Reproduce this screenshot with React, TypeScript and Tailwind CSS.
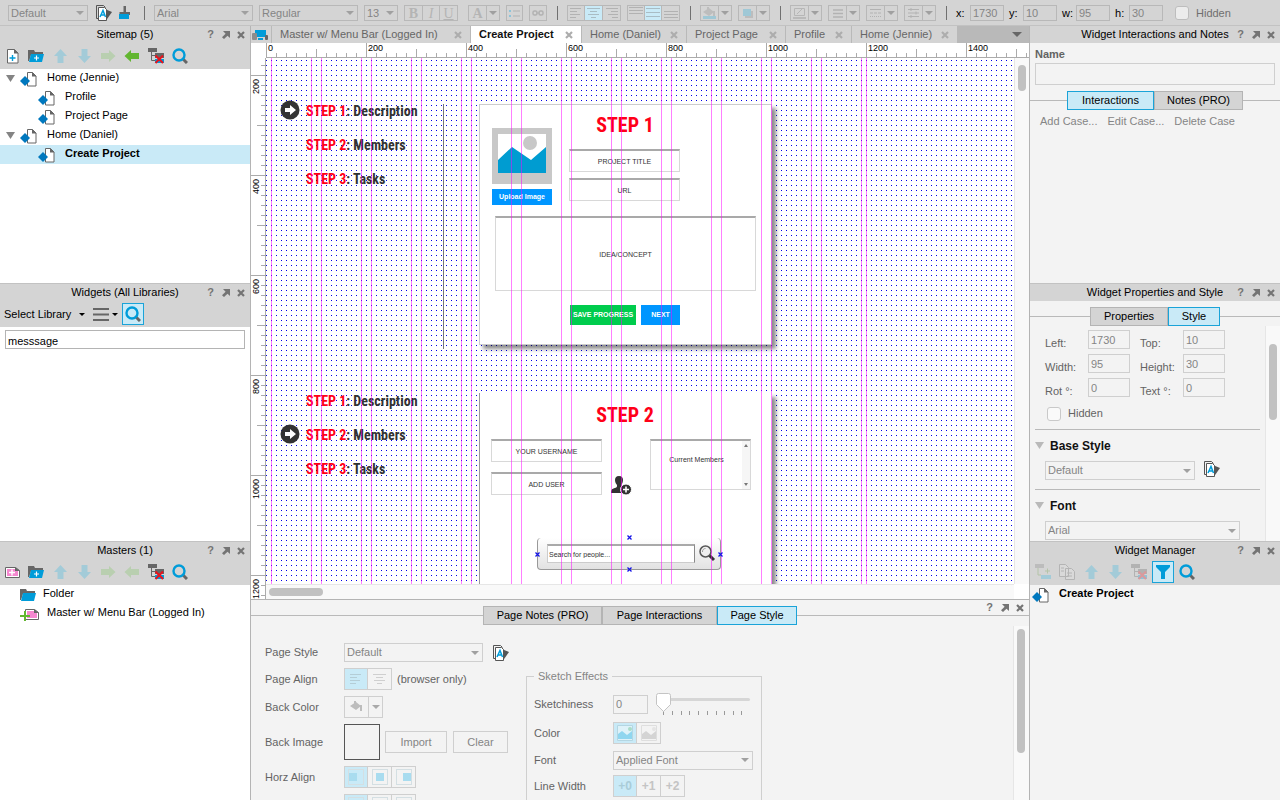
import React from "react";

type Kids = { children?: React.ReactNode };

const titleFont = "font-['Liberation_Sans_Narrow','Roboto_Condensed','Open_Sans_Condensed','Liberation_Sans',sans-serif]";

/* ---------- icons ---------- */

function Svg({ children, w = 16, h = 16, className = "" }: Kids & { w?: number; h?: number; className?: string }) {
  return (
    <svg width={w} height={h} viewBox={`0 0 ${w} ${h}`} className={`shrink-0 ${className}`} aria-hidden="true" fill="none">
      {children}
    </svg>
  );
}

const Caret = ({ className = "text-[#a0a0a0]" }: { className?: string }) => (
  <Svg w={8} h={4} className={className}>
    <path d="M0 0h8L4 4z" fill="currentColor" />
  </Svg>
);

const PageIcon = () => (
  <Svg w={17}>
    <path d="M7.500 1.500h5l3.500 3.500v10H7.500z" fill="#fff" stroke="#666" />
    <path d="M12 1v4.500h4.500z" fill="#666" />
    <path d="M0 10l5-5 5 5-5 5z" fill="#0078be" />
  </Svg>
);

const AddPage = () => (
  <Svg>
    <path d="M3.500 1.500h7l3.500 3.500v10H3.500z" fill="#fff" stroke="#666" />
    <path d="M10 1v4.500h4.500z" fill="#666" />
    <path d="M8.500 7v6M5.500 10h6" stroke="#009cd9" strokeWidth="1.400" />
  </Svg>
);

const Folder = ({ plus }: { plus?: boolean }) => (
  <Svg>
    <path d="M0 2h6l1 2h8v3H3L1 13H0z" fill="#666" />
    <path d="M3 6h13l-2 8H1z" fill="#009cd9" />
    {plus && <path d="M8.500 7.500v5M6 10h5" stroke="#fff" strokeWidth="1.200" />}
  </Svg>
);

const AddMaster = () => (
  <Svg>
    <path d="M1.500 3.500h10l4 3v7h-14z" fill="#fff" stroke="#666" />
    <path d="M3 5h8v2h3v5H3z" fill="#f587cf" />
    <path d="M11 3v4h5z" fill="#666" />
    <path d="M8 5.500v6M5 8.500h6" stroke="#fff" strokeWidth="1.400" />
  </Svg>
);

const MasterIcon = () => (
  <Svg w={20} h={16}>
    <path d="M5.500 3.500h9l4 3v7h-13z" fill="#fff" stroke="#666" />
    <path d="M7 5h7v2h3v5H7z" fill="#f587cf" />
    <path d="M14 3v4h5z" fill="#666" />
    <path d="M5 5v10M0 10h10" stroke="#62b630" strokeWidth="2" />
  </Svg>
);

const arrowPaths = {
  up: "M8.500 1L15 8h-3.500v7h-6V8H2z",
  down: "M8.500 15L2 8h3.500V1h6v7H15z",
  right: "M15.500 8L9 14v-3H1V5h8V2z",
  left: "M.5 8L7 2v3h8v6H7v3z",
};

const Arrow = ({ dir, className }: { dir: keyof typeof arrowPaths; className: string }) => (
  <Svg className={className}>
    <path d={arrowPaths[dir]} fill="currentColor" />
  </Svg>
);

const DeleteTree = ({ className = "" }: { className?: string }) => (
  <Svg className={className}>
    <path d="M0 0h9v4H0zM7 5h9v5H7z" fill="#666" />
    <path d="M3.500 4v8.500h4M3.500 7.500h4" stroke="#666" />
    <path d="M7 11h9v4H7z" fill="#009cd9" />
    <path d="M7.500 7.500l7.500 7.500M15 7.500L7.500 15" stroke="#e8131d" strokeWidth="2" />
  </Svg>
);

const SearchIcon = () => (
  <Svg>
    <path d="M11 11l4 4" stroke="#666" strokeWidth="3" />
    <circle cx="7" cy="7" r="5.500" stroke="#009cd9" strokeWidth="2.400" />
  </Svg>
);

const StyleIcon = () => (
  <Svg>
    <path d="M.5 13.500V.5h7l2 2M.5 13.500h2" stroke="#555" />
    <path d="M2.500 2.500h6l2 2v11h-8z" fill="#fff" stroke="#555" />
    <path d="M10 4.500l6 2.500-6 8.500z" fill="#555" />
    <path d="M4 12l3-6.500L9.500 12M5 10h4" stroke="#009cd9" strokeWidth="1.500" />
  </Svg>
);

const BrushIcon = () => (
  <Svg w={14} h={14}>
    <path d="M5.500 0h2.500v6h4v3H1.500V6h4z" fill="#666" />
    <path d="M1 8h10v5H1z" fill="#009cd9" />
  </Svg>
);

const Lines = ({ rows, className = "text-[#b2b2b2]" }: { rows: number[][]; className?: string }) => (
  <Svg w={14} h={12} className={className}>
    {rows.map(([x, y, w]) => (
      <rect key={y} x={x} y={y} width={w} height={1} fill="currentColor" />
    ))}
  </Svg>
);

const leftRows = [[1, 1, 11], [1, 4, 7], [1, 7, 10], [1, 10, 6]];
const centerRows = [[0, 1, 13], [3, 4, 7], [1, 7, 11], [4, 10, 5]];
const rightRows = [[1, 1, 12], [6, 4, 7], [3, 7, 10], [7, 10, 6]];
const topRows = [[0, 0, 14], [0, 3, 14], [0, 6, 14]];
const midRows = [[0, 1, 14], [0, 5, 14], [0, 9, 14]];
const bottomRows = [[0, 4, 14], [0, 7, 14], [0, 10, 14]];

const Bucket = ({ water = false }: { water?: boolean }) => (
  <Svg w={15} h={12}>
    <path d="M1 5l6-4 5 4-5 4z" fill="#bdbdbd" />
    <path d="M12 4v6M6 0v4" stroke="#bdbdbd" strokeWidth="2" />
    <path d="M1 9h13v3H1z" fill={water ? "#9fc8d6" : "none"} />
  </Svg>
);

/* ---------- shared controls ---------- */

function Select({ label, value, className }: { label: string; value: string; className: string }) {
  return (
    <div className={`relative flex shrink-0 items-center border ${className}`}>
      <select aria-label={label} defaultValue={value} className="h-full w-full appearance-none bg-transparent px-[2px] leading-none text-[#858585] outline-none">
        <option>{value}</option>
      </select>
      <span className="pointer-events-none absolute right-[3px]">
        <Caret />
      </span>
    </div>
  );
}

function Group({ children, className = "" }: Kids & { className?: string }) {
  return <div className={`flex shrink-0 divide-x border ${className}`}>{children}</div>;
}

function ToolBtn({ label, children, on, w }: Kids & { label: string; on?: boolean; w: string }) {
  return (
    <button aria-label={label} className={`flex h-full items-center justify-center border-inherit ${w} ${on ? "bg-[#c9eaf7]" : ""}`}>
      {children}
    </button>
  );
}

const barGroup = "h-4 border-[#b8b8b8] divide-[#b8b8b8]";
const panelGroup = "h-[22px] border-[#cfcfcf] divide-[#cfcfcf]";

const Divider = () => <div className="mr-[3px] ml-[4px] h-[14px] w-px shrink-0 bg-[#707070]" />;

const CloseIcon = () => (
  <Svg w={8} h={8}>
    <path d="M1 1l6 6M7 1L1 7" stroke="currentColor" strokeWidth="2.200" />
  </Svg>
);

const PanelButtons = () => (
  <div className="flex items-center gap-[7px] pr-[5px] text-[#747474]">
    <button aria-label="Help" className="text-[11px] leading-none font-bold">?</button>
    <button aria-label="Undock">
      <Svg w={9} h={8}>
        <path d="M2 0h7v7L6.500 4.700 3 8 1 6.200l3.600-3.500z" fill="currentColor" />
      </Svg>
    </button>
    <button aria-label="Close">
      <CloseIcon />
    </button>
  </div>
);

function PanelTitle({ children }: Kids) {
  return (
    <div className="grid h-[17px] grid-cols-[1fr_auto_1fr] items-center">
      <span />
      <h2 className="whitespace-nowrap">{children}</h2>
      <div className="flex justify-end">
        <PanelButtons />
      </div>
    </div>
  );
}

function Panel({ title, tools, children, body, grow = "flex-[258]" }: Kids & { title: string; tools?: React.ReactNode; body: string; grow?: string }) {
  return (
    <section className={`flex min-h-0 flex-col ${grow}`}>
      <header className="shrink-0 border-t border-[#c2c2c2] bg-[#d4d4d4]">
        <PanelTitle>{title}</PanelTitle>
        {tools && <div className="flex h-[26px] items-center gap-2 px-1">{tools}</div>}
      </header>
      <div className={`min-h-0 flex-1 overflow-hidden ${body}`}>{children}</div>
    </section>
  );
}

function TabStrip({ tabs, active }: { tabs: { name: string; w: string }[]; active: string }) {
  return (
    <div className="flex shrink-0 items-center">
      <div className="h-px flex-1 bg-[#b9b9b9]" />
      <div role="tablist" className="flex">
        {tabs.map((t) => (
          <button
            key={t.name}
            role="tab"
            aria-selected={t.name === active}
            className={`h-[19px] border ${t.w} ${t.name === active ? "border-[#1aa3d8] bg-[#c9eaf7]" : "border-[#b4b4b4] bg-[#d4d4d4]"}`}
          >
            {t.name}
          </button>
        ))}
      </div>
      <div className="h-px flex-1 bg-[#b9b9b9]" />
    </div>
  );
}

const moveArrows = (left: string) => (
  <>
    <button aria-label="Move up"><Arrow dir="up" className="text-[#a3cbd8]" /></button>
    <button aria-label="Move down"><Arrow dir="down" className="text-[#a3cbd8]" /></button>
    <button aria-label="Indent"><Arrow dir="right" className="text-[#b9cfb0]" /></button>
    <button aria-label="Outdent"><Arrow dir="left" className={left} /></button>
    <button aria-label="Delete"><DeleteTree /></button>
    <button aria-label="Search"><SearchIcon /></button>
  </>
);

/* ---------- top toolbar ---------- */

function BarField({ id, value }: { id: string; value: string }) {
  return (
    <div className="flex shrink-0 items-center">
      <label htmlFor={`bar-${id}`} className="w-[14px]">{id}:</label>
      <input id={`bar-${id}`} defaultValue={value} className="h-4 w-[34px] border border-[#b8b8b8] bg-transparent px-[2px] text-[#858585] outline-none" />
    </div>
  );
}

const DropBtn = ({ label }: { label: string }) => (
  <ToolBtn label={label} w="w-[12px]">
    <Caret />
  </ToolBtn>
);

function Toolbar() {
  const sel = "h-4 border-[#b8b8b8]";
  return (
    <div className="flex h-[25px] shrink-0 items-center gap-[6px] overflow-hidden bg-[#d4d4d4] pt-[1px] pl-2">
      <Select label="Widget style" value="Default" className={`w-[80px] ${sel}`} />
      <button aria-label="Style editor" className="ml-[2px]"><StyleIcon /></button>
      <button aria-label="Format painter" className="w-4"><BrushIcon /></button>
      <Divider />
      <Select label="Font family" value="Arial" className={`w-[99px] ${sel}`} />
      <Select label="Font weight" value="Regular" className={`w-[99px] ${sel}`} />
      <Select label="Font size" value="13" className={`w-[34px] ${sel}`} />
      <Group className={barGroup}>
        <ToolBtn label="Bold" w="w-[18px]"><b className="font-['Liberation_Serif',serif] text-[14px] text-[#b4b4b4]">B</b></ToolBtn>
        <ToolBtn label="Italic" w="w-[17px]"><i className="font-['Liberation_Serif',serif] text-[14px] text-[#b4b4b4]">I</i></ToolBtn>
        <ToolBtn label="Underline" w="w-[17px]"><u className="font-['Liberation_Serif',serif] text-[14px] text-[#b4b4b4]">U</u></ToolBtn>
      </Group>
      <Group className={`ml-[4px] ${barGroup}`}>
        <ToolBtn label="Text colour" w="w-[18px]"><b className="font-['Liberation_Serif',serif] text-[14px] text-[#b4b4b4]">A</b></ToolBtn>
        <DropBtn label="Text colour menu" />
      </Group>
      <Group className={barGroup}>
        <ToolBtn label="Bullets" w="w-[15px]">
          <Svg w={12} h={9}>
            <path d="M0 1h2v2H0zM0 6h2v2H0z" fill="#8cc4da" />
            <path d="M4 2h7M4 7h7" stroke="#b2b2b2" />
          </Svg>
        </ToolBtn>
      </Group>
      <Group className={barGroup}>
        <ToolBtn label="Link" w="w-[16px]">
          <Svg w={12} h={6}>
            <rect x="1" y="1" width="4" height="4" rx="1.500" stroke="#b2b2b2" strokeWidth="1.500" />
            <rect x="7" y="1" width="4" height="4" rx="1.500" stroke="#b2b2b2" strokeWidth="1.500" />
            <path d="M4 3h4" stroke="#b2b2b2" />
          </Svg>
        </ToolBtn>
      </Group>
      <Divider />
      <Group className={barGroup}>
        <ToolBtn label="Align left" w="w-[17px]"><Lines rows={leftRows} /></ToolBtn>
        <ToolBtn label="Align centre" w="w-[18px]" on><Lines rows={centerRows} className="text-[#a9bcc4]" /></ToolBtn>
        <ToolBtn label="Align right" w="w-[17px]"><Lines rows={rightRows} /></ToolBtn>
      </Group>
      <Group className={barGroup}>
        <ToolBtn label="Align top" w="w-[17px]"><Lines rows={topRows} /></ToolBtn>
        <ToolBtn label="Align middle" w="w-[17px]" on><Lines rows={midRows} className="text-[#a9bcc4]" /></ToolBtn>
        <ToolBtn label="Align bottom" w="w-[17px]"><Lines rows={bottomRows} /></ToolBtn>
      </Group>
      <Divider />
      <Group className={barGroup}>
        <ToolBtn label="Fill colour" w="w-[18px]"><Bucket water /></ToolBtn>
        <DropBtn label="Fill menu" />
      </Group>
      <Group className={barGroup}>
        <ToolBtn label="Shadow" w="w-[18px]">
          <Svg w={10} h={9}>
            <path d="M2 2h8v7H2z" fill="#bdbdbd" />
            <path d="M0 0h8v7H0z" fill="#9fc8d6" />
          </Svg>
        </ToolBtn>
        <DropBtn label="Shadow menu" />
      </Group>
      <Divider />
      <Group className={barGroup}>
        <ToolBtn label="Line colour" w="w-[18px]">
          <Svg w={13} h={12}>
            <path d="M1.500 1.500h10v7h-10zM4 7l6-6" stroke="#b6b6b6" />
            <path d="M0 10h13v2H0z" fill="#bababa" />
          </Svg>
        </ToolBtn>
        <DropBtn label="Line colour menu" />
      </Group>
      <Group className={barGroup}>
        <ToolBtn label="Line width" w="w-[18px]">
          <Svg w={10} h={9}><path d="M0 1h10M0 4.500h10M0 8h10" stroke="#b2b2b2" strokeWidth="1.500" /></Svg>
        </ToolBtn>
        <DropBtn label="Line width menu" />
      </Group>
      <Group className={barGroup}>
        <ToolBtn label="Line pattern" w="w-[18px]">
          <Svg w={11} h={8}>
            <path d="M0 .5h11" stroke="#b2b2b2" />
            <path d="M0 4h11" stroke="#b2b2b2" strokeDasharray="3 1" />
            <path d="M0 7.500h11" stroke="#b2b2b2" strokeDasharray="1 1" />
          </Svg>
        </ToolBtn>
        <DropBtn label="Line pattern menu" />
      </Group>
      <Group className={barGroup}>
        <ToolBtn label="Arrow style" w="w-[18px]">
          <Svg w={11} h={10}>
            <path d="M0 1.500h11M0 5h11M0 8.500h11M3 0v3M8 3.500v3M3 7v3" stroke="#b2b2b2" />
          </Svg>
        </ToolBtn>
        <DropBtn label="Arrow style menu" />
      </Group>
      <Divider />
      <div className="flex items-center gap-[5px]">
        <BarField id="x" value="1730" />
        <BarField id="y" value="10" />
        <BarField id="w" value="95" />
        <BarField id="h" value="30" />
      </div>
      <label className="ml-[6px] flex items-center gap-[7px] text-[#6f6f6f]">
        <input type="checkbox" className="size-[14px] appearance-none rounded-[3px] border border-[#bdbdbd] bg-[#ececec]" />
        Hidden
      </label>
    </div>
  );
}

/* ---------- left side ---------- */

function TreeRow({ label, child, open, selected }: { label: string; child?: boolean; open?: boolean; selected?: boolean }) {
  return (
    <li className={`flex h-[19px] items-center ${child ? "pl-[38px]" : "pl-[6px]"} ${selected ? "bg-[#c9eaf7] font-bold" : ""}`}>
      {open && (
        <Svg w={9} h={7} className="mr-[5px]">
          <path d="M0 0h9L4.500 7z" fill="#848484" />
        </Svg>
      )}
      <PageIcon />
      <span className="ml-[10px] pb-[2px]">{label}</span>
    </li>
  );
}

function LeftSide() {
  return (
    <aside className="flex w-[250px] shrink-0 flex-col">
      <Panel
        title="Sitemap (5)"
        body="bg-white"
        tools={
          <>
            <button aria-label="Add page"><AddPage /></button>
            <button aria-label="Add folder"><Folder plus /></button>
            {moveArrows("text-[#62b630]")}
          </>
        }
      >
        <ul>
          <TreeRow label="Home (Jennie)" open />
          <TreeRow label="Profile" child />
          <TreeRow label="Project Page" child />
          <TreeRow label="Home (Daniel)" open />
          <TreeRow label="Create Project" child selected />
        </ul>
      </Panel>
      <Panel
        title="Widgets (All Libraries)"
        body="bg-white p-[5px] pt-[3px]"
        tools={
          <>
            <button className="flex items-center gap-2">
              Select Library
              <Svg w={6} h={3}><path d="M0 0h6L3 3z" fill="#000" /></Svg>
            </button>
            <button aria-label="Library options" className="flex items-center gap-[3px]">
              <Svg w={16} h={13}><path d="M0 1h16M0 6.500h16M0 12h16" stroke="#666" strokeWidth="2" /></Svg>
              <Svg w={6} h={3}><path d="M0 0h6L3 3z" fill="#000" /></Svg>
            </button>
            <button aria-label="Search widgets" className="-ml-[4px] flex size-[22px] items-center justify-center border border-[#1aa3d8] bg-[#c9eaf7]">
              <SearchIcon />
            </button>
          </>
        }
      >
        <input aria-label="Search widgets" defaultValue="messsage" className="block h-[19px] w-full border border-[#b4b4b4] px-[2px] pt-[2px] outline-none" />
      </Panel>
      <Panel
        title="Masters (1)"
        grow="flex-[259]"
        body="bg-white"
        tools={
          <>
            <button aria-label="Add master"><AddMaster /></button>
            <button aria-label="Add folder"><Folder plus /></button>
            {moveArrows("text-[#b9cfb0]")}
          </>
        }
      >
        <ul>
          <li className="flex h-[19px] items-center gap-[7px] pl-5"><Folder /><span className="pb-[2px]">Folder</span></li>
          <li className="flex h-[19px] items-center gap-[7px] pl-5"><MasterIcon /><span className="pb-[2px]">Master w/ Menu Bar (Logged In)</span></li>
        </ul>
      </Panel>
    </aside>
  );
}

/* ---------- centre: tabs, rulers, canvas ---------- */

const pageTabs = [
  { name: "Master w/ Menu Bar (Logged In)", w: "w-[199px]" },
  { name: "Create Project", w: "w-[111px]", active: true },
  { name: "Home (Daniel)", w: "w-[105px]" },
  { name: "Project Page", w: "w-[99px]" },
  { name: "Profile", w: "w-[66px]" },
  { name: "Home (Jennie)", w: "w-[106px]" },
];

function PageTabs() {
  return (
    <div className="flex h-[17px] shrink-0 bg-[#b9b9b9]">
      <div className="flex w-5 shrink-0 items-center bg-[#d4d4d4] pl-[1px]">
        <Svg w={17} h={12}>
          <path d="M3 1h11v7H3zM6 9h5v2H6z" fill="#009cd9" />
          <rect x="0" y="4" width="5" height="7" rx="1" fill="#8c8c8c" />
          <rect x="13" y="6" width="3" height="5" rx="1" fill="#666" />
        </Svg>
      </div>
      {pageTabs.map((t) => (
        <div key={t.name} className={`flex shrink-0 items-center justify-between border-l border-[#b9b9b9] pr-[8px] pl-2 ${t.w} ${t.active ? "bg-white font-bold text-[#111]" : "bg-[#d4d4d4] text-[#666]"}`}>
          <button className="whitespace-nowrap">{t.name}</button>
          <button aria-label={`Close ${t.name}`} className="text-[#adadad]"><CloseIcon /></button>
        </div>
      ))}
      <button aria-label="All tabs" className="ml-auto pr-[7px]">
        <Svg w={10} h={5}><path d="M0 0h10L5 5z" fill="#666" /></Svg>
      </button>
    </div>
  );
}

const HTicks = () => (
  <svg className="absolute inset-0 h-full w-full" aria-hidden="true">
    <pattern id="hticks" width="100" height="15" patternUnits="userSpaceOnUse">
      <path d="M.5 0v15M50.500 6v9M10.500 10v5M20.500 10v5M30.500 10v5M40.500 10v5M60.500 10v5M70.500 10v5M80.500 10v5M90.500 10v5" stroke="#ababab" />
    </pattern>
    <rect width="100%" height="100%" fill="url(#hticks)" />
  </svg>
);

const VTicks = () => (
  <svg className="absolute inset-0 h-full w-full" aria-hidden="true">
    <pattern id="vticks" y="17" width="14" height="100" patternUnits="userSpaceOnUse">
      <path d="M0 .5h14M6 50.500h8M10 10.500h4M10 20.500h4M10 30.500h4M10 40.500h4M10 60.500h4M10 70.500h4M10 80.500h4M10 90.500h4" stroke="#ababab" />
    </pattern>
    <rect width="100%" height="100%" fill="url(#vticks)" />
  </svg>
);

function HRuler() {
  return (
    <div className="relative ml-[15px] flex h-[15px] shrink-0 overflow-hidden border-b border-[#ababab]">
      <HTicks />
      {[0, 200, 400, 600, 800, 1000, 1200, 1400].map((n) => (
        <span key={n} className="w-[100px] shrink-0 pl-[2px] text-[9px] leading-[10px]">{n}</span>
      ))}
    </div>
  );
}

function VRuler() {
  return (
    <div className="relative flex w-[15px] shrink-0 flex-col overflow-hidden border-r border-[#ababab] pt-[17px]">
      <VTicks />
      {[200, 400, 600, 800, 1000, 1200].map((n) => (
        <span key={n} className="h-[100px] shrink-0 rotate-180 pb-[4px] text-right text-[9px] leading-[11px] [writing-mode:vertical-rl]">{n}</span>
      ))}
    </div>
  );
}

const guides = [
  5, 45, 55, 95, 105, 145, 155, 195, 205, 245, 255, 295, 305, 345, 355, 395, 405, 445, 455, 495, 505, 545, 555, 595, 600,
];

const Grid = () => (
  <svg className="absolute inset-0 h-full w-full" aria-hidden="true">
    <pattern id="dots" y="2" width="5" height="5" patternUnits="userSpaceOnUse">
      <rect width="1" height="1" fill="#0000e6" />
    </pattern>
    <rect width="100%" height="100%" fill="url(#dots)" />
  </svg>
);

const Guides = () => (
  <svg className="pointer-events-none absolute inset-0 h-full w-full" aria-hidden="true">
    {guides.map((x) => (
      <rect key={x} x={x} y="0" width="1" height="100%" fill="#ff00ff" fillOpacity="0.5" />
    ))}
  </svg>
);

function StepList({ current, pos }: { current: number; pos: string }) {
  return (
    <ol className={`absolute left-[14px] ${pos}`}>
      {["Description", "Members", "Tasks"].map((s, i) => (
        <li key={s} className="flex h-[34px] items-center">
          <span className="w-[26px]">
            {current === i && (
              <Svg w={20} h={20}>
                <circle cx="10" cy="10" r="9.500" fill="#333" />
                <path d="M5 8h5V5l6 5-6 5v-3H5z" fill="#fff" />
              </Svg>
            )}
          </span>
          <span className={`pt-[2px] text-[14px] leading-[18px] font-bold whitespace-nowrap text-[#333] ${titleFont}`}>
            <span className="text-[#ff0018]">STEP {i + 1}</span>: {s}
          </span>
        </li>
      ))}
    </ol>
  );
}

function Field({ text, pos }: { text: string; pos: string }) {
  return (
    <input
      aria-label={text}
      defaultValue={text}
      className={`absolute border border-t-2 border-[#d8d8d8] border-t-[#a9a9a9] bg-white text-center text-[7px] text-[#333] outline-none ${pos}`}
    />
  );
}

const Handle = ({ pos }: { pos: string }) => (
  <Svg w={5} h={5} className={`absolute ${pos}`}>
    <path d="M.5.5l4 4M4.500.5l-4 4" stroke="#1414e6" strokeWidth="1.300" />
  </Svg>
);

function Canvas() {
  return (
    <div className="relative min-h-0 min-w-0 flex-1 overflow-hidden bg-white">
      <Grid />
      <StepList current={0} pos="top-[35px]" />
      <div className="absolute top-[46px] left-[177px] h-[245px] w-px bg-[#777]" />
      <StepList current={1} pos="top-[325px]" />

      {/* first step card */}
      <div className="absolute top-[46px] left-[213px] h-[241px] w-[293px] border border-[#ccc] bg-white shadow-[4px_4px_4px_rgba(0,0,0,0.45)]" />
      <h3 className={`absolute top-[52px] left-[313px] w-[92px] text-center text-[20px] leading-[30px] font-bold whitespace-nowrap text-[#ff0018] ${titleFont}`}>STEP 1</h3>
      <Svg w={60} h={56} className="absolute top-[70px] left-[226px]">
        <path d="M0 0h60v56H0z" fill="#c8c8c8" />
        <path d="M6 6h48v39H6z" fill="#fff" />
        <circle cx="38" cy="15" r="7" fill="#c8c8c8" />
        <path d="M6 32l14-13 19 13 15-13v26H6z" fill="#009cd1" />
      </Svg>
      <button className="absolute top-[131px] left-[226px] h-4 w-[60px] bg-[#0096ff] text-[7px] font-bold text-white">Upload Image</button>
      <Field text="PROJECT TITLE" pos="top-[91px] left-[303px] h-[23px] w-[111px]" />
      <Field text="URL" pos="top-[120px] left-[303px] h-[23px] w-[111px]" />
      <Field text="IDEA/CONCEPT" pos="top-[158px] left-[229px] h-[75px] w-[261px]" />
      <button className="absolute top-[247px] left-[304px] h-5 w-[66px] bg-[#00cc4d] text-[7px] font-bold whitespace-nowrap text-white">SAVE PROGRESS</button>
      <button className="absolute top-[247px] left-[375px] h-5 w-[39px] bg-[#0096ff] text-[7px] font-bold text-white">NEXT</button>

      {/* second step card */}
      <div className="absolute top-[335px] left-[213px] h-[280px] w-[293px] border-l border-[#999] bg-white shadow-[4px_4px_4px_rgba(0,0,0,0.45)]" />
      <h3 className={`absolute top-[342px] left-[313px] w-[92px] text-center text-[20px] leading-[30px] font-bold whitespace-nowrap text-[#ff0018] ${titleFont}`}>STEP 2</h3>
      <Field text="YOUR USERNAME" pos="top-[381px] left-[225px] h-[23px] w-[111px]" />
      <Field text="ADD USER" pos="top-[414px] left-[225px] h-[23px] w-[111px]" />
      <Svg w={21} h={20} className="absolute top-[417px] left-[345px]">
        <path d="M8 1c3 0 4 2 4 4s-1 4-1.500 5c0 2 1 2 3 3l-2 5H0c0-4 1-4 4-5 2-.6 2-1 2-3-1-1-2-3-2-5s1-4 4-4z" fill="#333" />
        <circle cx="15" cy="14.500" r="5.500" fill="#333" stroke="#fff" />
        <path d="M15 11.500v6M12 14.500h6" stroke="#fff" strokeWidth="1.600" />
      </Svg>
      <div className="absolute top-[381px] left-[384px] flex h-[51px] w-[101px] border border-t-2 border-[#d8d8d8] border-t-[#a9a9a9] bg-white text-[7px] text-[#333]">
        <span className="flex-1 pt-[14px] text-center leading-[9px]">Current Members</span>
        <span className="flex w-[8px] flex-col items-center justify-between bg-[#f6f6f6] py-[3px]">
          <Svg w={4} h={3}><path d="M0 3h4L2 0z" fill="#777" /></Svg>
          <Svg w={4} h={3}><path d="M0 0h4L2 3z" fill="#777" /></Svg>
        </span>
      </div>

      {/* people search */}
      <div className="absolute top-[480px] left-[271px] h-[32px] w-[184px] rounded-[4px] border-r border-b border-l border-[#999] bg-gradient-to-b from-white to-[#e2e2e2]" />
      <input aria-label="Search for people" defaultValue="Search for people..." className="absolute top-[486px] left-[281px] h-[19px] w-[148px] border border-t-2 border-[#ccc] border-t-[#a9a9a9] border-r-[#888] bg-white px-px text-[7px] text-[#333] outline-none" />
      <Svg w={17} h={17} className="absolute top-[487px] left-[433px]">
        <path d="M10 10l5 5" stroke="#333" strokeWidth="3" />
        <circle cx="6.500" cy="6.500" r="5.500" fill="#eee" stroke="#555" strokeWidth="1.500" />
        <path d="M3.500 7a3 3 0 0 1 3-3.500" stroke="#999" />
      </Svg>
      <Guides />
      <Handle pos="top-[477px] left-[361px]" />
      <Handle pos="top-[509px] left-[361px]" />
      <Handle pos="top-[494px] left-[269px]" />
      <Handle pos="top-[494px] left-[452px]" />
    </div>
  );
}

/* ---------- page settings panel ---------- */

function Row({ label, children, h = "h-[22px]" }: Kids & { label: string; h?: string }) {
  return (
    <div className={`flex items-center ${h}`}>
      <span className="w-[79px] shrink-0 text-[#636363]">{label}</span>
      {children}
    </div>
  );
}

const AlignBox = ({ x }: { x: number }) => (
  <Svg w={16} h={16}>
    <rect x=".5" y=".5" width="15" height="15" stroke="#d4dfe3" />
    <rect x={x} y="4" width="8" height="8" fill="#a9dcef" />
  </Svg>
);

const Landscape = ({ muted }: { muted?: boolean }) => (
  <Svg w={16} h={16}>
    <path d="M.5.5h15v15H.5z" fill={muted ? "#f3f3f3" : "#def2f9"} stroke={muted ? "#dedede" : "#b4d6e2"} />
    <path d="M1 9l4-3 5 4 5-4v8H1z" fill={muted ? "#d4d4d4" : "#8fd6ef"} />
    <circle cx="13" cy="4" r="2" fill={muted ? "#e4e4e4" : "#a9dcc8"} />
  </Svg>
);

function PagePanel() {
  const ghost = "text-[#c4c4c4]";
  return (
    <section className="flex h-[201px] shrink-0 flex-col border-t border-[#b4b4b4] bg-[#f3f3f3]">
      <div className="relative pt-[6px]">
        <TabStrip
          active="Page Style"
          tabs={[
            { name: "Page Notes (PRO)", w: "w-[119px]" },
            { name: "Page Interactions", w: "w-[115px]" },
            { name: "Page Style", w: "w-[80px]" },
          ]}
        />
        <div className="absolute top-[2px] right-0"><PanelButtons /></div>
      </div>
      <div className="flex min-h-0 flex-1 justify-between overflow-hidden">
        <div className="flex">
          <div className="flex w-[261px] flex-col gap-[6px] pt-[18px] pl-[14px]">
            <Row label="Page Style">
              <Select label="Page Style" value="Default" className="h-[19px] w-[139px] border-[#cfcfcf]" />
              <button aria-label="Edit page style" className="ml-[10px]"><StyleIcon /></button>
            </Row>
            <Row label="Page Align">
              <Group className={panelGroup}>
                <ToolBtn label="Left" w="w-[23px]" on><Lines rows={leftRows} className="text-[#b4cdd6]" /></ToolBtn>
                <ToolBtn label="Centre" w="w-[23px]"><Lines rows={centerRows} className="text-[#cfcfcf]" /></ToolBtn>
              </Group>
              <span className="ml-[5px] text-[#636363]">(browser only)</span>
            </Row>
            <Row label="Back Color">
              <Group className={panelGroup}>
                <ToolBtn label="Back colour" w="w-[24px]"><Bucket /></ToolBtn>
                <ToolBtn label="Back colour menu" w="w-[13px]"><Caret className="text-[#a9a9a9]" /></ToolBtn>
              </Group>
            </Row>
            <Row label="Back Image" h="h-9">
              <span className="size-9 border border-[#555]" />
              <button className="ml-[5px] h-[22px] w-[62px] border border-[#cfcfcf] text-[#858585]">Import</button>
              <button className="ml-[6px] h-[22px] w-[55px] border border-[#cfcfcf] text-[#858585]">Clear</button>
            </Row>
            <Row label="Horz Align">
              <Group className={panelGroup}>
                <ToolBtn label="Left" w="w-[23px]" on><AlignBox x={1} /></ToolBtn>
                <ToolBtn label="Centre" w="w-[24px]"><AlignBox x={4} /></ToolBtn>
                <ToolBtn label="Right" w="w-[23px]"><AlignBox x={7} /></ToolBtn>
              </Group>
            </Row>
            <Row label="">
              <Group className={panelGroup}>
                <ToolBtn label="Top" w="w-[23px]" on><AlignBox x={4} /></ToolBtn>
                <ToolBtn label="Middle" w="w-[24px]"><AlignBox x={4} /></ToolBtn>
                <ToolBtn label="Bottom" w="w-[23px]"><AlignBox x={4} /></ToolBtn>
              </Group>
            </Row>
          </div>
          <fieldset className="mt-[45px] ml-[14px] h-[180px] w-[236px] border border-[#cfcfcf] pl-[7px]">
            <legend className="px-1 leading-[13px] text-[#858585]">Sketch Effects</legend>
            <div className="flex flex-col gap-[6px] pt-[10px]">
              <Row label="Sketchiness">
                <input aria-label="Sketchiness" defaultValue="0" className="h-[19px] w-[35px] border border-[#cfcfcf] px-[2px] text-[#858585] outline-none" />
                <label className="relative ml-[7px] h-[22px] w-[96px]">
                  <input type="range" aria-label="Sketchiness amount" min="0" max="100" defaultValue="0" className="absolute inset-0 opacity-0" />
                  <Svg w={96} h={22}>
                    <rect x="6" y="5" width="89" height="3" rx="1.500" fill="#d6d6d6" />
                    <path d="M8.500 18v4M17.500 18v4M26.500 18v4M34.500 18v4M43.500 18v4M52.500 18v4M61.500 18v4M69.500 18v4M78.500 18v4M86.500 18v4" stroke="#999" />
                    <path d="M3.500.5h10q2 0 2 2v9l-7 7-7-7v-9q0-2 2-2z" fill="#fff" stroke="#c4c4c4" />
                  </Svg>
                </label>
              </Row>
              <Row label="Color" h="h-[24px]">
                <Group className={panelGroup}>
                  <ToolBtn label="Colour" w="w-[23px]" on><Landscape /></ToolBtn>
                  <ToolBtn label="Greyscale" w="w-[23px]"><Landscape muted /></ToolBtn>
                </Group>
              </Row>
              <Row label="Font" h="h-[18px]">
                <Select label="Font" value="Applied Font" className="h-[19px] w-[140px] border-[#cfcfcf]" />
              </Row>
              <Row label="Line Width">
                <Group className={panelGroup}>
                  <ToolBtn label="+0" w="w-[23px]" on><b className="text-[12px] text-[#a9ccd8]">+0</b></ToolBtn>
                  <ToolBtn label="+1" w="w-[24px]"><b className={`text-[12px] ${ghost}`}>+1</b></ToolBtn>
                  <ToolBtn label="+2" w="w-[23px]"><b className={`text-[12px] ${ghost}`}>+2</b></ToolBtn>
                </Group>
              </Row>
            </div>
          </fieldset>
        </div>
        <div className="mt-[1px] w-4 border-l border-[#e6e6e6] bg-[#f9f9f9] pt-[3px] pl-[3px]">
          <div className="h-[124px] w-2 rounded-full bg-[#c1c1c1]" />
        </div>
      </div>
    </section>
  );
}

function Centre() {
  return (
    <main className="flex min-w-0 flex-1 flex-col border-x border-[#b4b4b4] bg-white">
      <PageTabs />
      <HRuler />
      <div className="flex min-h-0 flex-1">
        <VRuler />
        <div className="flex min-w-0 flex-1 flex-col">
          <div className="flex min-h-0 flex-1">
            <Canvas />
            <div className="w-[15px] shrink-0 border-l border-[#e6e6e6] bg-[#f9f9f9] pt-[7px] pl-[3px]">
              <div className="h-[26px] w-2 rounded-full bg-[#c1c1c1]" />
            </div>
          </div>
          <div className="mr-[15px] h-[15px] shrink-0 border-t border-[#e6e6e6] bg-[#f9f9f9] pt-[3px] pl-[3px]">
            <div className="h-2 w-[54px] rounded-full bg-[#c1c1c1]" />
          </div>
        </div>
      </div>
      <PagePanel />
    </main>
  );
}

/* ---------- right side ---------- */

function Num({ label, value, w }: { label: string; value: string; w: string }) {
  return (
    <label className="flex h-[24px] items-center text-[#636363]">
      <span className={`pt-[2px] ${w}`}>{label}</span>
      <input defaultValue={value} className="-mt-[5px] h-[19px] w-[42px] border border-[#cfcfcf] px-[2px] text-[#858585] outline-none" />
    </label>
  );
}

function Section({ title, children }: Kids & { title: string }) {
  return (
    <div className="ml-[5px] border-t border-[#b9b9b9]">
      <h3 className="flex h-[31px] items-center gap-[6px] text-[12px] font-bold text-[#111]">
        <Svg w={9} h={7}><path d="M0 0h9L4.500 7z" fill="#b9b9b9" /></Svg>
        {title}
      </h3>
      <div className="flex h-[28px] items-start gap-[9px] pl-[10px]">{children}</div>
    </div>
  );
}

function RightSide() {
  return (
    <aside className="flex w-[250px] shrink-0 flex-col bg-[#f3f3f3]">
      <Panel title="Widget Interactions and Notes" body="bg-[#f3f3f3]">
        <label htmlFor="widget-name" className="mt-[3px] block pl-[5px] leading-[17px] font-bold text-[#636363]">Name</label>
        <div className="px-[5px]">
          <input id="widget-name" className="block h-[22px] w-full border border-[#cfcfcf] outline-none" />
        </div>
        <div className="pt-[6px]">
          <TabStrip active="Interactions" tabs={[{ name: "Interactions", w: "w-[87px]" }, { name: "Notes (PRO)", w: "w-[89px]" }]} />
        </div>
        <div className="flex gap-[10px] pt-[5px] pl-[10px] leading-[13px] text-[#858585]">
          <a href="#add">Add Case...</a>
          <a href="#edit">Edit Case...</a>
          <a href="#delete">Delete Case</a>
        </div>
      </Panel>
      <Panel title="Widget Properties and Style" body="flex flex-col bg-[#f3f3f3] pt-[6px]">
        <TabStrip active="Style" tabs={[{ name: "Properties", w: "w-[78px]" }, { name: "Style", w: "w-[52px]" }]} />
        <div className="flex min-h-0 flex-1">
          <div className="flex-1 overflow-hidden pt-[4px]">
            <div className="grid grid-cols-[95px_auto] justify-start pl-[15px]">
              <Num label="Left:" value="1730" w="w-[43px]" />
              <Num label="Top:" value="10" w="w-[43px]" />
              <Num label="Width:" value="95" w="w-[43px]" />
              <Num label="Height:" value="30" w="w-[43px]" />
              <Num label="Rot °:" value="0" w="w-[43px]" />
              <Num label="Text °:" value="0" w="w-[43px]" />
            </div>
            <label className="mb-[4px] flex h-[23px] items-center gap-[7px] pl-[17px] text-[#636363]">
              <input type="checkbox" className="size-[14px] appearance-none rounded-[3px] border border-[#c9c9c9] bg-[#fafafa]" />
              Hidden
            </label>
            <Section title="Base Style">
              <Select label="Base Style" value="Default" className="h-[19px] w-[150px] border-[#cfcfcf]" />
              <button aria-label="Edit base style"><StyleIcon /></button>
            </Section>
            <Section title="Font">
              <Select label="Font" value="Arial" className="h-[19px] w-[195px] border-[#cfcfcf]" />
            </Section>
          </div>
          <div className="ml-[5px] w-[15px] border-l border-[#e6e6e6] bg-[#f9f9f9] pt-[18px] pl-[3px]">
            <div className="h-[76px] w-2 rounded-full bg-[#c1c1c1]" />
          </div>
        </div>
      </Panel>
      <Panel
        title="Widget Manager"
        grow="flex-[259]"
        body="bg-[#f3f3f3]"
        tools={
          <>
            <button aria-label="Add state" className="ml-[1px]">
              <Svg>
                <path d="M0 0h9v4H0z" fill="#bcbcbc" />
                <path d="M3 4v7h3M10 7h5M12.500 4.500v5" stroke="#b4c4a8" />
                <path d="M6 11h10v4H6z" fill="#a3cbd8" />
              </Svg>
            </button>
            <button aria-label="Duplicate">
              <Svg>
                <path d="M.5.5h6l3 3v9h-9zM6.500 4.500h6l3 3v8h-9zM2 4h3M2 7h3M8 9h5M8 12h5" stroke="#b4b4b4" fill="#d9d9d9" />
              </Svg>
            </button>
            <button aria-label="Move up"><Arrow dir="up" className="text-[#a3cbd8]" /></button>
            <button aria-label="Move down"><Arrow dir="down" className="text-[#a3cbd8]" /></button>
            <button aria-label="Delete"><DeleteTree className="opacity-30" /></button>
            <button aria-label="Filter" className="-mx-[3px] flex size-[22px] items-center justify-center border border-[#1aa3d8] bg-[#c9eaf7]">
              <Svg><path d="M1 1h14v2l-5 5v7H6V8L1 3z" fill="#009cd9" /></Svg>
            </button>
            <button aria-label="Search"><SearchIcon /></button>
          </>
        }
      >
        <div className="flex h-[19px] items-center gap-[10px] pl-[2px] font-bold"><PageIcon /><span className="pb-[2px]">Create Project</span></div>
      </Panel>
    </aside>
  );
}

export default function App() {
  return (
    <div className="flex h-screen flex-col overflow-hidden bg-[#d4d4d4] font-['Liberation_Sans',Arial,sans-serif] text-[11px] text-black">
      <Toolbar />
      <div className="flex min-h-0 flex-1">
        <LeftSide />
        <div className="flex min-w-0 flex-1 border-t border-[#c2c2c2]">
          <Centre />
        </div>
        <RightSide />
      </div>
    </div>
  );
}
